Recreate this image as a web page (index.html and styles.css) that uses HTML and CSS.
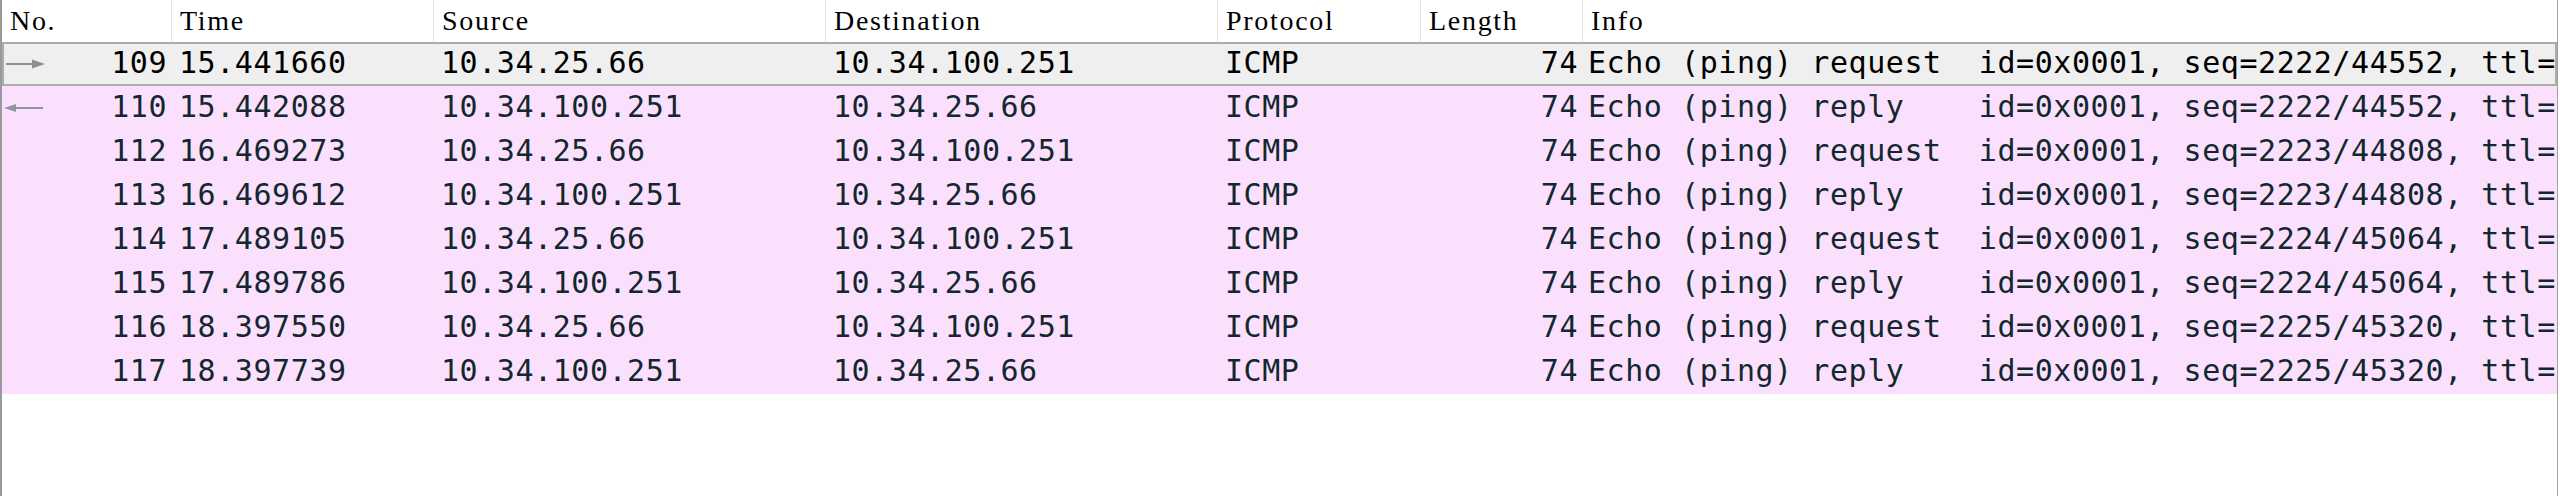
FILE: index.html
```html
<!DOCTYPE html>
<html>
<head>
<meta charset="utf-8">
<link rel="stylesheet" href="styles.css">
</head>
<body>
<div class="packet-list">
  <div class="header">
    <div class="hcell">No.</div>
    <div class="hcell">Time</div>
    <div class="hcell">Source</div>
    <div class="hcell">Destination</div>
    <div class="hcell">Protocol</div>
    <div class="hcell">Length</div>
    <div class="hcell last">Info</div>
  </div>
  <div class="row selected">
    <div class="cell no"><svg class="arrow" width="44" height="10" viewBox="0 0 44 10"><line x1="2" y1="5" x2="31" y2="5" stroke="#85909a" stroke-width="2"/><polygon points="28,0.5 41,5 28,9.5" fill="#85909a"/></svg><span>109</span></div>
    <div class="cell">15.441660</div>
    <div class="cell">10.34.25.66</div>
    <div class="cell">10.34.100.251</div>
    <div class="cell">ICMP</div>
    <div class="cell num">74</div>
    <div class="cell info">Echo (ping) request  id=0x0001, seq=2222/44552, ttl=</div>
  </div>
  <div class="row icmp">
    <div class="cell no"><svg class="arrow" width="44" height="10" viewBox="0 0 44 10"><line x1="10" y1="5" x2="39" y2="5" stroke="#8d959d" stroke-width="2"/><polygon points="0,5 12,1 12,9" fill="#8d959d"/></svg><span>110</span></div>
    <div class="cell">15.442088</div>
    <div class="cell">10.34.100.251</div>
    <div class="cell">10.34.25.66</div>
    <div class="cell">ICMP</div>
    <div class="cell num">74</div>
    <div class="cell info">Echo (ping) reply    id=0x0001, seq=2222/44552, ttl=</div>
  </div>
  <div class="row icmp">
    <div class="cell no"><span>112</span></div>
    <div class="cell">16.469273</div>
    <div class="cell">10.34.25.66</div>
    <div class="cell">10.34.100.251</div>
    <div class="cell">ICMP</div>
    <div class="cell num">74</div>
    <div class="cell info">Echo (ping) request  id=0x0001, seq=2223/44808, ttl=</div>
  </div>
  <div class="row icmp">
    <div class="cell no"><span>113</span></div>
    <div class="cell">16.469612</div>
    <div class="cell">10.34.100.251</div>
    <div class="cell">10.34.25.66</div>
    <div class="cell">ICMP</div>
    <div class="cell num">74</div>
    <div class="cell info">Echo (ping) reply    id=0x0001, seq=2223/44808, ttl=</div>
  </div>
  <div class="row icmp">
    <div class="cell no"><span>114</span></div>
    <div class="cell">17.489105</div>
    <div class="cell">10.34.25.66</div>
    <div class="cell">10.34.100.251</div>
    <div class="cell">ICMP</div>
    <div class="cell num">74</div>
    <div class="cell info">Echo (ping) request  id=0x0001, seq=2224/45064, ttl=</div>
  </div>
  <div class="row icmp">
    <div class="cell no"><span>115</span></div>
    <div class="cell">17.489786</div>
    <div class="cell">10.34.100.251</div>
    <div class="cell">10.34.25.66</div>
    <div class="cell">ICMP</div>
    <div class="cell num">74</div>
    <div class="cell info">Echo (ping) reply    id=0x0001, seq=2224/45064, ttl=</div>
  </div>
  <div class="row icmp">
    <div class="cell no"><span>116</span></div>
    <div class="cell">18.397550</div>
    <div class="cell">10.34.25.66</div>
    <div class="cell">10.34.100.251</div>
    <div class="cell">ICMP</div>
    <div class="cell num">74</div>
    <div class="cell info">Echo (ping) request  id=0x0001, seq=2225/45320, ttl=</div>
  </div>
  <div class="row icmp">
    <div class="cell no"><span>117</span></div>
    <div class="cell">18.397739</div>
    <div class="cell">10.34.100.251</div>
    <div class="cell">10.34.25.66</div>
    <div class="cell">ICMP</div>
    <div class="cell num">74</div>
    <div class="cell info">Echo (ping) reply    id=0x0001, seq=2225/45320, ttl=</div>
  </div>
</div>
</body>
</html>
```
FILE: styles.css
```css
html, body {
  margin: 0;
  padding: 0;
  background: #ffffff;
}

.packet-list {
  box-sizing: border-box;
  width: 2558px;
  height: 496px;
  border-left: 2px solid #9a9a9a;
  border-right: 1px solid #a0a0a0;
  overflow: hidden;
  background: #ffffff;
}

.header,
.row {
  display: grid;
  grid-template-columns: 170px 262px 392px 392px 203px 162px 1fr;
  min-width: 0;
}

.header {
  height: 42px;
}

.hcell {
  box-sizing: border-box;
  height: 42px;
  border-right: 1px solid #e2e2e2;
  padding-left: 8px;
  font-family: "Liberation Serif", "Times New Roman", serif;
  font-size: 28px;
  letter-spacing: 1.7px;
  line-height: 42px;
  color: #000000;
  white-space: nowrap;
  overflow: hidden;
}

.hcell.last {
  border-right: none;
}

.row {
  height: 44px;
  font-family: "DejaVu Sans Mono", "Liberation Mono", monospace;
  font-size: 30px;
  letter-spacing: 0.55px;
  line-height: 41px;
  white-space: pre;
}

.row.selected {
  background: #efefef;
  color: #000000;
  box-shadow: inset 0 0 0 2px #ababab;
}

.row.icmp {
  background: #fbe0fd;
  color: #12272e;
}

.cell {
  box-sizing: border-box;
  padding-left: 7px;
  overflow: hidden;
  white-space: pre;
}

.cell.no {
  display: flex;
  align-items: center;
  justify-content: space-between;
  padding-left: 2px;
  padding-right: 5px;
  height: 41px;
}

.cell.no span {
  margin-left: auto;
}

.cell.num {
  text-align: right;
  padding-right: 5px;
}

.cell.info {
  padding-left: 5px;
  padding-right: 0;
}

.arrow {
  display: block;
  flex: none;
  margin-top: 3px;
}
```
